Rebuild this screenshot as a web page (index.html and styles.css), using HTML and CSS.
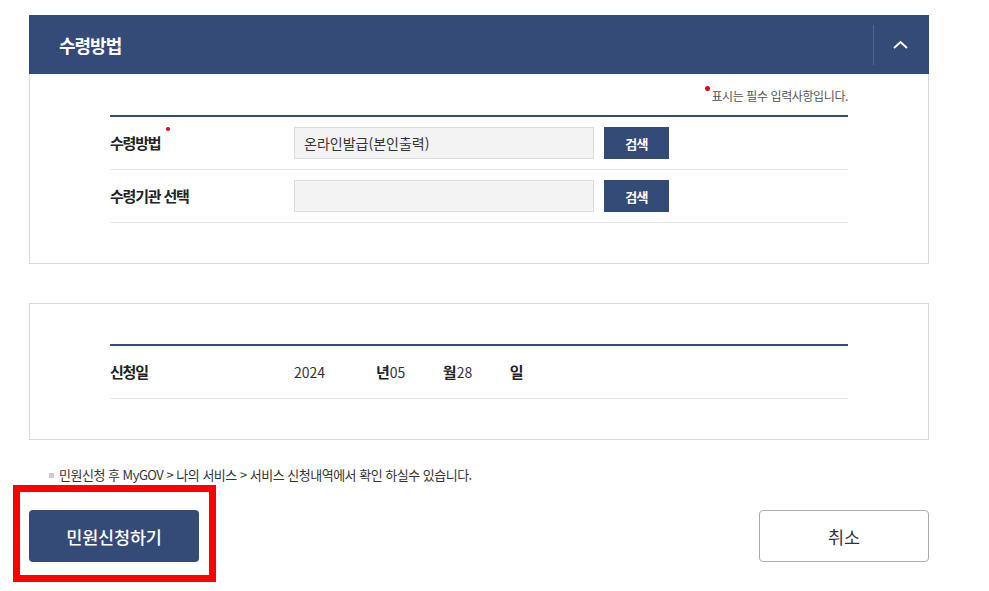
FILE: index.html
```html
<!DOCTYPE html>
<html lang="ko">
<head>
    <meta charset="UTF-8">
    <title>수령방법</title>
    <link rel="stylesheet" href="styles.css">
</head>
<body>
    <div class="wrap">
        <div class="sec-head">
            <h2>수령방법</h2>
            <button class="toggle" type="button" aria-label="접기">
                <svg width="15" height="9" viewBox="0 0 15 9"><polyline points="1,8 7.5,2 14,8" fill="none" stroke="#fff" stroke-width="2"/></svg>
            </button>
        </div>
        <div class="panel panel-top">
            <p class="req-note"><span class="dot"></span>표시는 필수 입력사항입니다.</p>
            <div class="form-table">
                <div class="row">
                    <div class="label">수령방법<span class="dot"></span></div>
                    <div class="field">
                        <div class="input">온라인발급(본인출력)</div>
                        <button class="btn-search" type="button">검색</button>
                    </div>
                </div>
                <div class="row">
                    <div class="label">수령기관 선택</div>
                    <div class="field">
                        <div class="input"></div>
                        <button class="btn-search" type="button">검색</button>
                    </div>
                </div>
            </div>
        </div>

        <div class="panel panel-date">
            <div class="form-table">
                <div class="row">
                    <div class="label">신청일</div>
                    <div class="field date">
                        <span class="d-year">2024</span><b>년</b><span class="d-md">05</span><b>월</b><span class="d-md">28</span><b>일</b>
                    </div>
                </div>
            </div>
        </div>

        <p class="info">민원신청 후 MyGOV &gt; 나의 서비스 &gt; 서비스 신청내역에서 확인 하실수 있습니다.</p>

        <div class="btn-area">
            <button class="btn-apply" type="button">민원신청하기</button>
            <button class="btn-cancel" type="button">취소</button>
        </div>
    </div>
    <!-- annotation box around the apply button -->
    <div class="highlight"></div>
</body>
</html>
```
FILE: styles.css
```css
body { margin: 0; background: #fff; color: #333; font-family: "Noto Sans CJK KR", "Noto Sans", sans-serif; }
.wrap { width: 900px; margin: 15px 0 0 29px; }
button { font-family: inherit; cursor: pointer; }

.sec-head { height: 59px; background: #344b77; display: flex; align-items: center; justify-content: space-between; }
.sec-head h2 { margin: 0 0 0 30px; color: #fff; font-size: 18px; font-weight: 700; letter-spacing: -1px; line-height: 24px; }
.toggle { width: 56px; height: 40px; background: none; border: 0; border-left: 1px solid rgba(255,255,255,0.15); padding: 0 3px 0 0; display: flex; align-items: center; justify-content: center; }

.panel { border: 1px solid #d9d9d9; padding: 0 80px 40px 80px; }
.panel-top { border-top: 0; padding-top: 12px; }
.panel-date { margin-top: 39px; padding-top: 40px; }

.dot { display: inline-block; width: 5px; height: 5px; border-radius: 50%; background: #e60012; vertical-align: top; }
.req-note { margin: 0 0 9px; text-align: right; font-size: 12px; line-height: 20px; letter-spacing: -0.4px; color: #555; }
.req-note .dot { margin: 0 1px 0 0; }

.form-table { border-top: 2px solid #344b77; }
.row { display: flex; align-items: center; height: 52px; border-bottom: 1px solid #e8e8e8; }
.label { width: 184px; font-size: 15px; font-weight: 700; letter-spacing: -1.2px; line-height: 20px; color: #222; }
.label .dot { width: 4px; height: 4px; margin: -6px 0 0 6px; }
.field { display: flex; align-items: center; }
.input { width: 280px; height: 30px; padding: 0 9px; background: #f3f3f3; border: 1px solid #dcdcdc; font-size: 14px; line-height: 30px; color: #333; }
.btn-search { width: 65px; height: 32px; margin-left: 10px; border: 0; background: #344b77; color: #fff; font-size: 13px; font-weight: 700; letter-spacing: -0.8px; }

.date { font-size: 14px; line-height: 20px; color: #333; }
.date b { font-size: 15px; font-weight: 700; color: #222; }
.d-year { width: 82px; display: inline-block; }
.d-md { width: 53px; display: inline-block; }

.info { margin: 26px 0 0 20px; font-size: 13px; line-height: 18px; letter-spacing: -0.5px; color: #333; }
.info::before { content: ""; display: inline-block; width: 5px; height: 5px; background: #ccc; margin: 0 5px 2px 0; vertical-align: middle; }

.btn-area { display: flex; justify-content: space-between; margin-top: 26px; }
.btn-apply, .btn-cancel { width: 170px; height: 52px; border-radius: 4px; font-size: 17.5px; letter-spacing: -0.2px; }
.btn-apply { background: #344b77; color: #fff; border: 0; font-weight: 500; }
.btn-cancel { background: #fff; color: #333; border: 1px solid #aaa; }

.highlight { position: absolute; left: 13px; top: 485px; width: 189px; height: 83px; border: 7px solid #ff0000; }
```
